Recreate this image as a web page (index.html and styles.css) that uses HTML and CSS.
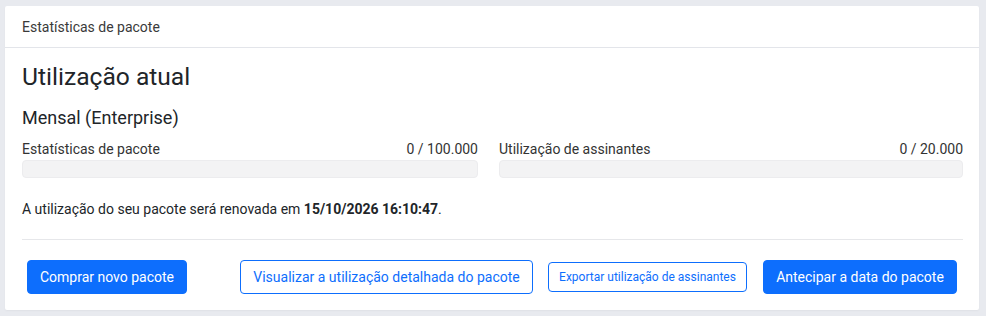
FILE: index.html
```html
<!DOCTYPE html>
<html lang="pt">
<head>
<meta charset="utf-8">
<link rel="stylesheet" href="styles.css">
</head>
<body>
<div class="card">
  <div class="card-header">Estatísticas de pacote</div>
  <div class="card-body">
    <h3 class="title">Utilização atual</h3>
    <h5 class="plan">Mensal (Enterprise)</h5>
    <div class="usage">
      <div class="usage-item">
        <div class="usage-label"><span>Estatísticas de pacote</span><span>0 / 100.000</span></div>
        <div class="bar"></div>
      </div>
      <div class="usage-item">
        <div class="usage-label"><span>Utilização de assinantes</span><span>0 / 20.000</span></div>
        <div class="bar"></div>
      </div>
    </div>
    <p class="renew">A utilização do seu pacote será renovada em <strong>15/10/2026 16:10:47</strong>.</p>
    <hr class="divider">
    <div class="actions">
      <button class="btn btn-primary btn-buy">Comprar novo pacote</button>
      <button class="btn btn-outline btn-detail">Visualizar a utilização detalhada do pacote</button>
      <button class="btn btn-outline btn-sm btn-export">Exportar utilização de assinantes</button>
      <button class="btn btn-primary btn-advance">Antecipar a data do pacote</button>
    </div>
  </div>
</div>
</body>
</html>
```
FILE: styles.css
```css
html, body {
  margin: 0;
  padding: 0;
}
body {
  background: #e8eaef;
  font-family: Roboto, "Noto Sans", sans-serif;
  color: #212529;
  padding: 6px 7px 5px 5px;
}
.card {
  background: #fff;
  border-radius: 2px;
  box-shadow: 0 1px 2px rgba(0,0,0,0.04);
}
.card-header {
  height: 42px;
  box-sizing: border-box;
  display: flex;
  align-items: center;
  padding: 0 17px;
  border-bottom: 1px solid #e3e5ea;
  font-size: 14px;
  color: #3a3a3a;
}
.card-body {
  padding: 0 16px 16px 17px;
}
.title {
  margin: 13px 0 0;
  font-size: 24.6px;
  font-weight: 400;
  line-height: 32px;
  color: #212529;
}
.plan {
  margin: 12px 0 0;
  font-size: 18px;
  font-weight: 400;
  line-height: 26px;
  color: #212529;
}
.usage {
  margin-top: 8px;
  display: grid;
  grid-template-columns: 456px 464px;
  column-gap: 21px;
}
.usage-label {
  display: flex;
  justify-content: space-between;
  font-size: 14px;
  line-height: 20px;
  color: #333;
}
.bar {
  margin-top: 1px;
  height: 18px;
  box-sizing: border-box;
  background: #f3f3f4;
  border: 1px solid #ececee;
  border-radius: 4px;
}
.renew {
  margin: 21px 0 0;
  font-size: 14px;
  line-height: 20px;
  color: #212529;
}
.renew strong {
  font-weight: 700;
}
.divider {
  margin: 20px 0 0;
  border: 0;
  border-top: 1px solid #e6e7ea;
  height: 0;
}
.actions {
  margin-top: 20px;
  display: flex;
  align-items: center;
}
.btn {
  font-family: inherit;
  font-size: 14px;
  height: 34px;
  box-sizing: border-box;
  border-radius: 4px;
  padding: 0;
  text-align: center;
  cursor: pointer;
}
.btn-primary {
  background: #0d6efd;
  border: 1px solid #0d6efd;
  color: #fff;
}
.btn-outline {
  background: #fff;
  border: 1px solid #0d6efd;
  color: #0d6efd;
}
.btn-sm {
  height: 30px;
  font-size: 12px;
}
.btn-buy { width: 160px; margin-left: 5px; }
.btn-detail { width: 293px; margin-left: 53px; }
.btn-export { width: 199px; margin-left: 15px; }
.btn-advance { width: 194px; margin-left: 16px; }
```
